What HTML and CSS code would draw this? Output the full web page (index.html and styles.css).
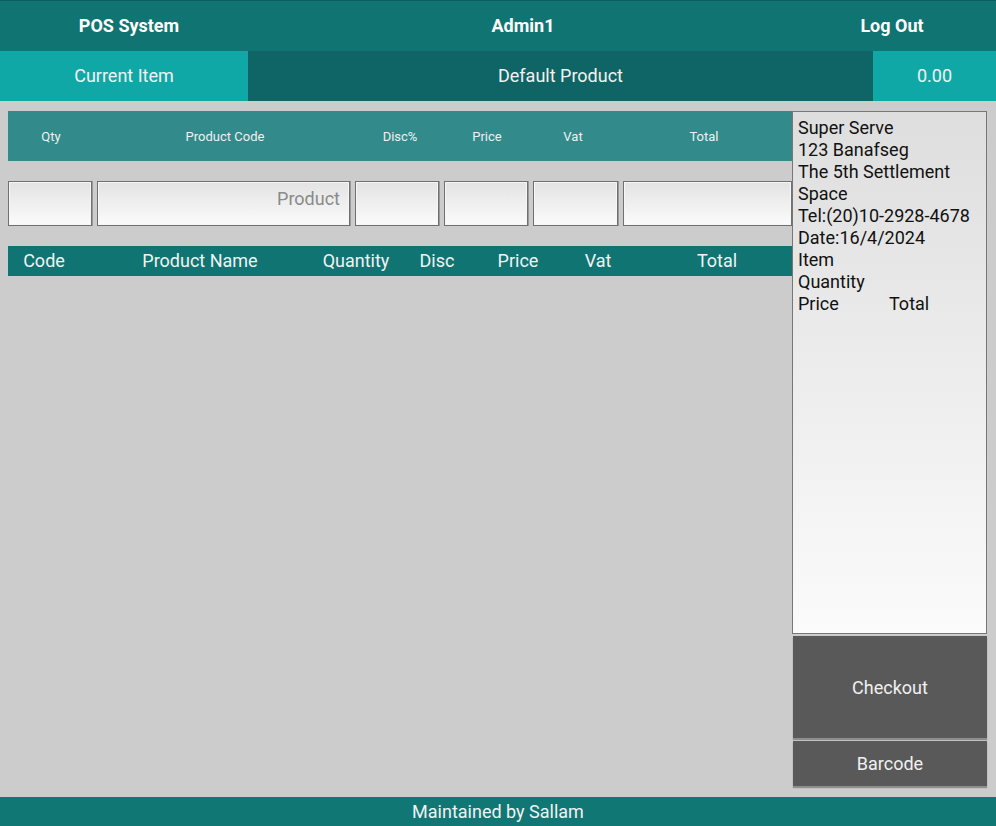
FILE: index.html
```html
<!DOCTYPE html>
<html>
<head>
<meta charset="utf-8">
<title>POS System</title>
<link rel="stylesheet" href="styles.css">
</head>
<body>
<div class="app">
  <header class="topbar">
    <div class="top-cell">POS System</div>
    <div class="top-cell">Admin1</div>
    <div class="top-cell">Log Out</div>
  </header>
  <div class="subbar">
    <div class="sub-cell light">Current Item</div>
    <div class="sub-cell dark">Default Product</div>
    <div class="sub-cell light">0.00</div>
  </div>
  <main class="main">
    <section class="left">
      <div class="entry-head">
        <div class="h-qty">Qty</div>
        <div class="h-code">Product Code</div>
        <div class="h-disc">Disc%</div>
        <div class="h-price">Price</div>
        <div class="h-vat">Vat</div>
        <div class="h-total">Total</div>
      </div>
      <div class="entry-row">
        <input class="field c-qty" type="text">
        <input class="field c-code" type="text" placeholder="Product">
        <input class="field c-disc" type="text">
        <input class="field c-price" type="text">
        <input class="field c-vat" type="text">
        <input class="field c-total" type="text">
      </div>
      <div class="table-head">
        <div class="t-code">Code</div>
        <div class="t-name">Product Name</div>
        <div class="t-qty">Quantity</div>
        <div class="t-disc">Disc</div>
        <div class="t-price">Price</div>
        <div class="t-vat">Vat</div>
        <div class="t-total">Total</div>
      </div>
    </section>
    <aside class="right">
      <div class="receipt">
        <div>Super Serve</div>
        <div>123 Banafseg</div>
        <div>The 5th Settlement</div>
        <div>Space</div>
        <div>Tel:(20)10-2928-4678</div>
        <div>Date:16/4/2024</div>
        <div>Item</div>
        <div>Quantity</div>
        <div class="price-row"><span class="pr-price">Price</span><span>Total</span></div>
      </div>
      <button class="btn checkout">Checkout</button>
      <button class="btn barcode">Barcode</button>
    </aside>
  </main>
  <footer class="footer">Maintained by Sallam</footer>
</div>
</body>
</html>
```
FILE: styles.css
```css
* { box-sizing: border-box; }
html, body { margin: 0; padding: 0; }
body {
  font-family: Roboto, "Noto Sans", sans-serif;
  background: #cccccc;
}
.app {
  width: 996px;
  height: 826px;
  display: flex;
  flex-direction: column;
}
.topbar {
  height: 51px;
  background: #107472;
  border-top: 1px solid #0c5f5d;
  display: grid;
  grid-template-columns: 258px 530px 208px;
  color: #fff;
  font-weight: 700;
  font-size: 18px;
}
.top-cell {
  display: flex;
  align-items: center;
  justify-content: center;
  padding-bottom: 1px;
}
.subbar {
  height: 50px;
  display: grid;
  grid-template-columns: 248px 625px 123px;
  font-size: 18px;
  color: #f2f2f2;
}
.sub-cell {
  display: flex;
  align-items: center;
  justify-content: center;
  padding-bottom: 1px;
}
.sub-cell.light { background: #10a8a6; }
.sub-cell.dark { background: #0f6566; }
.main {
  flex: 1;
  display: flex;
  padding: 10px 9px 11px 8px;
}
.left {
  width: 784px;
  display: flex;
  flex-direction: column;
}
.entry-head {
  height: 50px;
  background: #328b8a;
  color: #f0f0f0;
  font-size: 13px;
  display: flex;
  align-items: center;
}
.entry-head > div { text-align: center; }
.h-qty { width: 86px; }
.h-code { width: 262px; }
.h-disc { width: 88px; }
.h-price { width: 86px; }
.h-vat { width: 86px; }
.h-total { width: 176px; }
.entry-row {
  display: flex;
  gap: 5px;
  margin-top: 20px;
  height: 45px;
}
.c-qty { width: 84px; }
.c-code { width: 253px; }
.c-disc { width: 84px; }
.c-price { width: 84px; }
.c-vat { width: 85px; margin-left: 1px; }
.c-total { width: 169px; }
.field {
  height: 45px;
  margin: 0;
  border: 1px solid #707070;
  box-shadow: inset 0 0 0 1px #f6f6f6, 1px 0 0 #999;
  background: linear-gradient(#e3e3e3, #fbfbfb);
  font-family: Roboto, "Noto Sans", sans-serif;
  font-size: 18px;
  text-align: right;
  padding: 0 9px 10px 4px;
  outline: none;
}
.field::placeholder { color: #8a8a8a; }
.table-head {
  margin-top: 20px;
  height: 30px;
  background: #107472;
  color: #f2f2f2;
  font-size: 18px;
  display: flex;
  align-items: center;
  padding-bottom: 1px;
}
.table-head > div { text-align: center; }
.t-code { width: 72px; }
.t-name { width: 240px; }
.t-qty { width: 72px; }
.t-disc { width: 90px; }
.t-price { width: 72px; }
.t-vat { width: 88px; }
.t-total { width: 150px; }
.right {
  width: 195px;
  display: flex;
  flex-direction: column;
}
.receipt {
  height: 523px;
  border: 1px solid #777;
  background: linear-gradient(#dedede, #fbfbfb);
  padding: 5px 5px;
  font-size: 18px;
  line-height: 22px;
  color: #111;
}
.price-row { display: flex; }
.pr-price { width: 91px; }
.btn {
  margin-left: 1px;
  width: 194px;
  border: none;
  background: #595959;
  color: #f0f0f0;
  font-family: Roboto, "Noto Sans", sans-serif;
  font-size: 18px;
  box-shadow: 0 2px 1px rgba(0,0,0,0.3);
  padding: 0;
}
.checkout { margin-top: 2px; height: 102px; }
.barcode { margin-top: 3px; height: 45px; }
.footer {
  height: 29px;
  background: #107775;
  color: #f2f2f2;
  font-size: 18px;
  display: flex;
  align-items: center;
  justify-content: center;
}
```
